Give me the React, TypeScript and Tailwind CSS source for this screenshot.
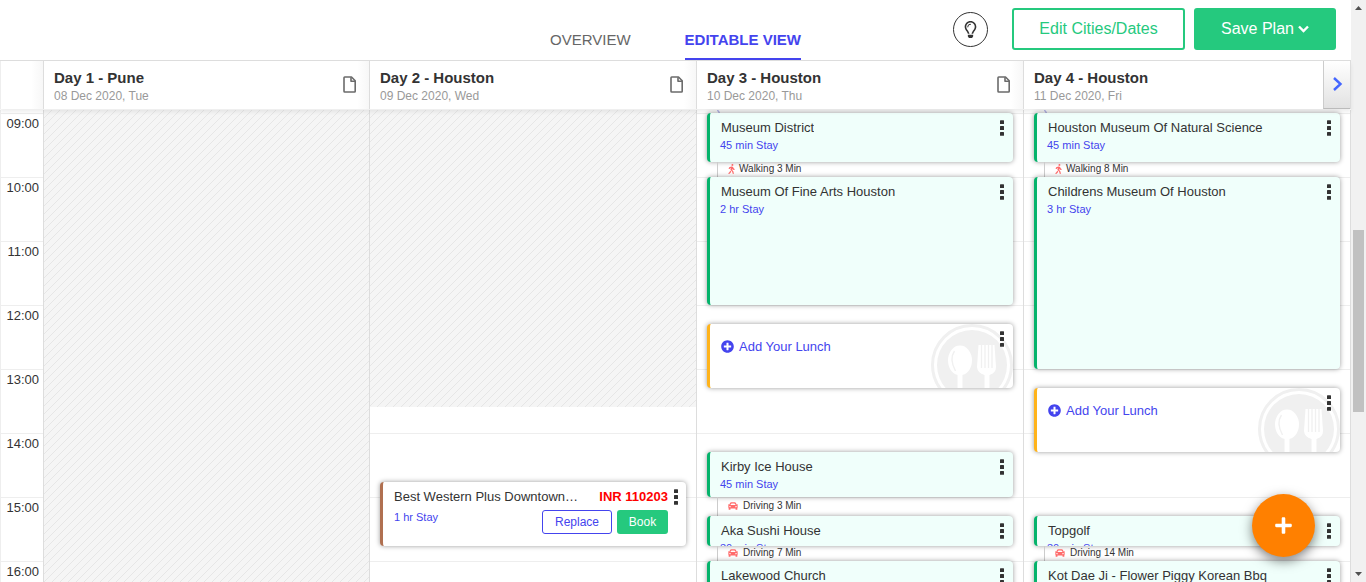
import React from "react";
import { FaCar, FaPlus, FaPlusCircle, FaRegLightbulb, FaWalking } from "react-icons/fa";

const gridLines =
  "bg-[repeating-linear-gradient(to_bottom,transparent_0,transparent_3px,#eeeeee_3px,#eeeeee_4px,transparent_4px,transparent_64px)]";
const hatch =
  "bg-[#f5f5f5] bg-[linear-gradient(135deg,#e6e6e6_6%,#f5f5f5_6%,#f5f5f5_44%,#e6e6e6_44%,#e6e6e6_56%,#f5f5f5_56%,#f5f5f5_94%,#e6e6e6_94%)] bg-[length:8px_8px]";
const cardShadow = "shadow-[0_0_5px_rgba(0,0,0,0.4)]";
const columns = "grid grid-cols-[44px_minmax(0,326fr)_minmax(0,327fr)_minmax(0,327fr)_minmax(0,327fr)]";
const column = "flex min-w-0 flex-col border-r border-[#dddddd]";

function Kebab({ label }: { label: string }) {
  return (
    <button type="button" aria-label={"Options for " + label} className="h-4 w-1 shrink-0 cursor-pointer text-[#333]">
      <svg viewBox="0 0 4 16" className="h-4 w-1" fill="currentColor">
        <rect x="0" y="0.2" width="4" height="3.8" rx="0.5" />
        <rect x="0" y="6.1" width="4" height="3.8" rx="0.5" />
        <rect x="0" y="12" width="4" height="3.8" rx="0.5" />
      </svg>
    </button>
  );
}

function Place({ name, stay, size }: { name: string; stay: string; size: string }) {
  return (
    <article className={"mx-2.5 flex shrink-0 justify-between overflow-hidden rounded-[4px] border-l-[3px] border-[#05b36b] bg-[#f0fffb] pt-[7px] pr-[9px] pl-[10px] " + cardShadow + " " + size}>
      <div className="min-w-0">
        <h3 className="truncate pl-px text-[13px] leading-4 text-[#333]">{name}</h3>
        <p className="mt-[3px] text-[11px] leading-3 text-[#4444ee]">{stay}</p>
      </div>
      <Kebab label={name} />
    </article>
  );
}

function Transit({ mode, text, size }: { mode: "walk" | "drive"; text: string; size: string }) {
  return (
    <div className={"mr-2.5 ml-5 flex shrink-0 items-center border-l border-[#cccccc] pb-0.5 pl-2.5 text-[10px] leading-3 text-[#333] " + size}>
      {mode === "walk" ? (
        <FaWalking className="mr-1 h-2.5 w-[7px] text-[#ff6b6b]" />
      ) : (
        <FaCar className="mr-[5px] size-2.5 text-[#ff6b6b]" />
      )}
      {text}
    </div>
  );
}

function ArrowTail() {
  return (
    <svg viewBox="0 0 4 3" className="ml-5 h-[3px] w-1 shrink-0" aria-hidden="true">
      <path d="M0.500 0L2.500 3" stroke="#b9b9ee" strokeWidth="1.4" />
    </svg>
  );
}

function Plate() {
  return (
    <svg viewBox="0 0 82 64" className="absolute top-0 right-0 h-16 w-[82px]" aria-hidden="true">
      <circle cx="41" cy="41" r="39.5" fill="none" stroke="#f0f0f0" strokeWidth="3" />
      <circle cx="41" cy="41" r="35" fill="#f0f0f0" />
      <ellipse cx="29" cy="36.500" rx="12" ry="15" fill="#fff" />
      <path d="M23.500 27q-5.500 8 1 20" fill="none" stroke="#f0f0f0" strokeWidth="1.4" />
      <path d="M26.500 49h5v20h-5zM47.500 21h16l1.500 22q0 6-6.500 8v18h-5V51q-7-2-7.500-8z" fill="#fff" />
      <path d="M50.500 21v23M54 21v23M57.500 21v23M61 21v23" stroke="#f0f0f0" strokeWidth="1.300" />
    </svg>
  );
}

function Lunch({ gap }: { gap: string }) {
  return (
    <article className={"relative mx-2.5 flex h-16 shrink-0 justify-between overflow-hidden rounded-[4px] border-l-[3px] border-[#ffb31a] bg-white pt-[7px] pr-[9px] pl-[11px] " + cardShadow + " " + gap}>
      <Plate />
      <button type="button" className="mt-2 flex h-[15px] cursor-pointer items-center gap-[5px] text-[13px] leading-[15px] text-[#4444ee]">
        <FaPlusCircle className="size-[13px]" />
        Add Your Lunch
      </button>
      <div className="relative flex">
        <Kebab label="lunch" />
      </div>
    </article>
  );
}

function DayHead({ title, date, children }: { title: string; date: string; children: React.ReactNode }) {
  return (
    <div className="flex min-w-0 justify-between border-r border-[#dddddd] bg-white bg-[linear-gradient(to_left,#f7f7f7,transparent_12px)]">
      <div className="pt-2 pl-2.5">
        <h2 className="text-[15px] leading-[18px] font-bold text-[#333]">{title}</h2>
        <p className="mt-[3px] text-[12px] leading-3 text-[#999]">{date}</p>
      </div>
      {children}
    </div>
  );
}

function FileButton({ day }: { day: string }) {
  return (
    <button type="button" aria-label={"Notes for " + day} className="mr-[13px] flex cursor-pointer items-center pb-px text-[#6b6b6b]">
      <svg viewBox="0 0 13 17" className="h-[17px] w-[13px]" fill="none" stroke="currentColor" strokeWidth="1.6" strokeLinejoin="round">
        <path d="M1.700 1H8.500L12.200 4.700V15.300Q12.200 16 11.500 16H1.700Q1 16 1 15.300V1.700Q1 1 1.700 1Z" />
        <path d="M8 1.200V5.200H12" />
      </svg>
    </button>
  );
}

const hours = ["09:00", "10:00", "11:00", "12:00", "13:00", "14:00", "15:00", "16:00"];

export default function App() {
  return (
    <div className="flex h-screen overflow-hidden bg-white font-['Liberation_Sans',Arial,sans-serif]">
      <div className="flex min-w-0 flex-1 flex-col">
        <header className="grid h-[61px] shrink-0 grid-cols-[1fr_auto_1fr] border-b border-[#dddddd]">
          <nav className="col-start-2 flex items-end gap-[54px] text-[15px] leading-5">
            <a href="#overview" className="pb-2.5 text-[#666]">OVERVIEW</a>
            <a href="#edit" className="border-b-2 border-[#4444ee] pb-2 font-bold text-[#4444ee]">EDITABLE VIEW</a>
          </nav>
          <div className="flex items-start justify-end pt-2 pr-[15px] text-[16px]">
            <button type="button" aria-label="Tips" className="mt-1 mr-6 flex size-[35px] cursor-pointer items-center justify-center rounded-full border border-[#333] text-[#333]">
              <FaRegLightbulb className="h-[17px] w-[13px]" />
            </button>
            <button type="button" className="mr-[9px] h-[42px] w-[173px] cursor-pointer rounded-[3px] border-2 border-[#25c97e] text-[#25c97e]">Edit Cities/Dates</button>
            <button type="button" className="flex h-[42px] w-[142px] cursor-pointer items-center justify-center gap-1 rounded-[3px] bg-[#25c97e] text-white">
              Save Plan
              <svg viewBox="0 0 11 8" className="h-2 w-[11px]" fill="none" stroke="currentColor" strokeWidth="2.4"><path d="M1 1.500L5.500 6L10 1.500" /></svg>
            </button>
          </div>
        </header>

        <div className={"z-10 h-12 shrink-0 shadow-[0_3px_4px_rgba(0,0,0,0.07)] " + columns}>
          <div className="border-x border-l-[#eeeeee] border-r-[#dddddd] bg-white bg-[linear-gradient(to_left,#f7f7f7,transparent_12px)]" />
          <DayHead title="Day 1 - Pune" date="08 Dec 2020, Tue"><FileButton day="Day 1" /></DayHead>
          <DayHead title="Day 2 - Houston" date="09 Dec 2020, Wed"><FileButton day="Day 2" /></DayHead>
          <DayHead title="Day 3 - Houston" date="10 Dec 2020, Thu"><FileButton day="Day 3" /></DayHead>
          <DayHead title="Day 4 - Houston" date="11 Dec 2020, Fri">
            <button type="button" aria-label="Next days" className="flex w-[27px] cursor-pointer items-center justify-center border-b border-l border-b-[#bbbbbb] border-l-[#cccccc] bg-linear-to-b from-white to-[#e2e2e2] pb-0.5 pl-0.5 text-[#4466ff]">
              <svg viewBox="0 0 10 14" className="h-3.5 w-2.5" fill="none" stroke="currentColor" strokeWidth="2.4"><path d="M1 1L7.500 7L1 13" /></svg>
            </button>
          </DayHead>
        </div>

        <main className={"min-h-0 flex-1 overflow-hidden pt-px " + columns}>
          <div className="border-x border-l-[#eeeeee] border-r-[#dddddd] pt-[3px]">
            {hours.map((h) => (
              <div key={h} className="h-16 border-t border-[#eeeeee] pt-0.5 pr-1 text-right text-[13px] leading-4 text-[#333]">{h}</div>
            ))}
          </div>
          <section className={column + " " + hatch} aria-label="Day 1" />
          <section className={column + " " + gridLines} aria-label="Day 2">
            <div className={"mb-[75px] h-[297px] shrink-0 " + hatch} />
            <article className={"mx-2.5 flex h-16 shrink-0 gap-[6px] overflow-hidden rounded-[4px] border-l-[3px] border-[#b07050] bg-white pt-[7px] pr-2 pl-[11px] " + cardShadow}>
              <div className="min-w-0 flex-1">
                <div className="flex justify-between gap-5">
                  <h3 className="truncate text-[13px] leading-4 text-[#333]">Best Western Plus Downtown Houston</h3>
                  <span className="shrink-0 text-[13px] leading-4 font-bold text-[#ff0000]">INR 110203</span>
                </div>
                <div className="mt-[5px] flex text-[12px]">
                  <p className="mt-px flex-1 text-[11px] leading-3 text-[#4444ee]">1 hr Stay</p>
                  <button type="button" className="mr-[5px] h-6 w-[70px] cursor-pointer rounded-[3px] border border-[#4444ee] text-[#4444ee]">Replace</button>
                  <button type="button" className="h-6 w-[51px] cursor-pointer rounded-[3px] bg-[#25c97e] text-white">Book</button>
                </div>
              </div>
              <Kebab label="Best Western Plus Downtown" />
            </article>
          </section>
          <section className={column + " " + gridLines} aria-label="Day 3">
            <ArrowTail />
            <Place name="Museum District" stay="45 min Stay" size="h-[49px]" />
            <Transit mode="walk" text="Walking 3 Min" size="h-[15px]" />
            <Place name="Museum Of Fine Arts Houston" stay="2 hr Stay" size="h-32" />
            <Lunch gap="mt-[19px] mb-16" />
            <Place name="Kirby Ice House" stay="45 min Stay" size="h-[45px]" />
            <Transit mode="drive" text="Driving 3 Min" size="h-[19px]" />
            <Place name="Aka Sushi House" stay="30 min Stay" size="h-[30px]" />
            <Transit mode="drive" text="Driving 7 Min" size="h-[15px]" />
            <Place name="Lakewood Church" stay="45 min Stay" size="h-[45px]" />
          </section>
          <section className={column + " " + gridLines} aria-label="Day 4">
            <ArrowTail />
            <Place name="Houston Museum Of Natural Science" stay="45 min Stay" size="h-[49px]" />
            <Transit mode="walk" text="Walking 8 Min" size="h-[15px]" />
            <Place name="Childrens Museum Of Houston" stay="3 hr Stay" size="h-48" />
            <Lunch gap="mt-[19px] mb-16" />
            <Place name="Topgolf" stay="30 min Stay" size="h-[30px]" />
            <Transit mode="drive" text="Driving 14 Min" size="h-[15px]" />
            <Place name="Kot Dae Ji - Flower Piggy Korean Bbq" stay="45 min Stay" size="h-[45px]" />
          </section>
        </main>
      </div>

      <div className="flex w-[15px] shrink-0 flex-col items-center bg-[#f1f1f1]" aria-hidden="true">
        <svg viewBox="0 0 15 15" className="size-[15px]"><path d="M4 10h7L7.500 6z" fill="#505050" /></svg>
        <div className="mt-[215px] h-[182px] w-[11px] bg-[#c1c1c1]" />
        <svg viewBox="0 0 15 15" className="mt-auto size-[15px]"><path d="M4 5h7L7.500 9z" fill="#505050" /></svg>
      </div>

      <button type="button" aria-label="Add" className="fixed right-[51px] bottom-[25px] z-20 flex size-[63px] cursor-pointer items-center justify-center rounded-full bg-[#ff8000] text-white shadow-[0_4px_12px_rgba(0,0,0,0.5)]">
        <FaPlus className="size-[19px]" />
      </button>
    </div>
  );
}
